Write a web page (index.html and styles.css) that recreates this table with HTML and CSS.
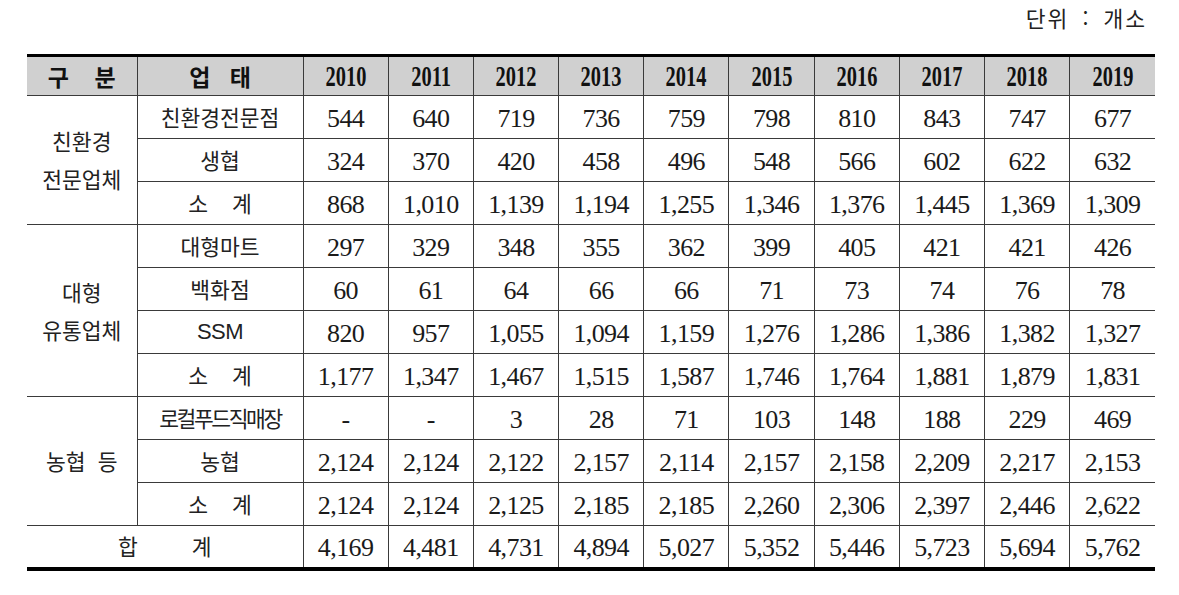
FILE: index.html
```html
<!DOCTYPE html>
<html lang="ko">
<head>
<meta charset="utf-8">
<link rel="stylesheet" href="styles.css">
</head>
<body>
<div class="page">
  <div class="unit">단위 : 개소</div>
  <table class="stats">
    <colgroup>
      <col class="c-grp"><col class="c-type">
      <col class="c-yr"><col class="c-yr"><col class="c-yr"><col class="c-yr"><col class="c-yr">
      <col class="c-yr"><col class="c-yr"><col class="c-yr"><col class="c-yr"><col class="c-yr">
    </colgroup>
    <thead>
      <tr class="head">
        <th class="ko-h">구&nbsp;&nbsp;&nbsp;&nbsp;분</th>
        <th class="ko-h">업&nbsp;&nbsp;&nbsp;태</th>
        <th><span class="yr">2010</span></th>
        <th><span class="yr">2011</span></th>
        <th><span class="yr">2012</span></th>
        <th><span class="yr">2013</span></th>
        <th><span class="yr">2014</span></th>
        <th><span class="yr">2015</span></th>
        <th><span class="yr">2016</span></th>
        <th><span class="yr">2017</span></th>
        <th><span class="yr">2018</span></th>
        <th><span class="yr">2019</span></th>
      </tr>
    </thead>
    <tbody>
      <tr>
        <td class="grp" rowspan="3">친환경<br>전문업체</td>
        <td class="ko">친환경전문점</td>
        <td>544</td><td>640</td><td>719</td><td>736</td><td>759</td><td>798</td><td>810</td><td>843</td><td>747</td><td>677</td>
      </tr>
      <tr>
        <td class="ko">생협</td>
        <td>324</td><td>370</td><td>420</td><td>458</td><td>496</td><td>548</td><td>566</td><td>602</td><td>622</td><td>632</td>
      </tr>
      <tr>
        <td class="ko">소&nbsp;&nbsp;&nbsp;&nbsp;계</td>
        <td>868</td><td>1,010</td><td>1,139</td><td>1,194</td><td>1,255</td><td>1,346</td><td>1,376</td><td>1,445</td><td>1,369</td><td>1,309</td>
      </tr>
      <tr>
        <td class="grp" rowspan="4">대형<br>유통업체</td>
        <td class="ko">대형마트</td>
        <td>297</td><td>329</td><td>348</td><td>355</td><td>362</td><td>399</td><td>405</td><td>421</td><td>421</td><td>426</td>
      </tr>
      <tr>
        <td class="ko">백화점</td>
        <td>60</td><td>61</td><td>64</td><td>66</td><td>66</td><td>71</td><td>73</td><td>74</td><td>76</td><td>78</td>
      </tr>
      <tr>
        <td class="ko ssm">SSM</td>
        <td>820</td><td>957</td><td>1,055</td><td>1,094</td><td>1,159</td><td>1,276</td><td>1,286</td><td>1,386</td><td>1,382</td><td>1,327</td>
      </tr>
      <tr>
        <td class="ko">소&nbsp;&nbsp;&nbsp;&nbsp;계</td>
        <td>1,177</td><td>1,347</td><td>1,467</td><td>1,515</td><td>1,587</td><td>1,746</td><td>1,764</td><td>1,881</td><td>1,879</td><td>1,831</td>
      </tr>
      <tr>
        <td class="grp" rowspan="3">농협&nbsp;&nbsp;등</td>
        <td class="ko tight">로컬푸드직매장</td>
        <td>-</td><td>-</td><td>3</td><td>28</td><td>71</td><td>103</td><td>148</td><td>188</td><td>229</td><td>469</td>
      </tr>
      <tr>
        <td class="ko">농협</td>
        <td>2,124</td><td>2,124</td><td>2,122</td><td>2,157</td><td>2,114</td><td>2,157</td><td>2,158</td><td>2,209</td><td>2,217</td><td>2,153</td>
      </tr>
      <tr>
        <td class="ko">소&nbsp;&nbsp;&nbsp;&nbsp;계</td>
        <td>2,124</td><td>2,124</td><td>2,125</td><td>2,185</td><td>2,185</td><td>2,260</td><td>2,306</td><td>2,397</td><td>2,446</td><td>2,622</td>
      </tr>
      <tr class="total">
        <td class="ko" colspan="2">합&nbsp;&nbsp;&nbsp;&nbsp;&nbsp;&nbsp;&nbsp;&nbsp;&nbsp;계</td>
        <td>4,169</td><td>4,481</td><td>4,731</td><td>4,894</td><td>5,027</td><td>5,352</td><td>5,446</td><td>5,723</td><td>5,694</td><td>5,762</td>
      </tr>
    </tbody>
  </table>
</div>
</body>
</html>
```

FILE: styles.css
```css
html, body {
  margin: 0;
  padding: 0;
  background: #ffffff;
}

.page {
  width: 1128px;
  padding: 4px 0 0 27px;
  font-family: "Liberation Serif", "Noto Sans CJK KR", serif;
  color: #1a1a1a;
}

.unit {
  font-family: "Noto Sans CJK KR", sans-serif;
  font-size: 21.5px;
  line-height: 28px;
  text-align: right;
  padding-right: 8px;
  letter-spacing: 2px;
  word-spacing: 5px;
  height: 50px;
  color: #222;
}

.stats {
  width: 1128px;
  table-layout: fixed;
  border-collapse: collapse;
  border-top: 3px solid #000;
  border-bottom: 4px solid #000;
}

.c-grp { width: 110px; }
.c-type { width: 166px; }
.c-yr { width: 85.2px; }

.stats th,
.stats td {
  border: 1px solid #3a3a3a;
  padding: 0;
  text-align: center;
  vertical-align: middle;
  overflow: hidden;
  white-space: nowrap;
}

.stats tr > :first-child { border-left: none; }
.stats tr > :last-child { border-right: none; }

.head {
  height: 40px;
  background: #d0d0d0;
}

.head th {
  font-weight: bold;
}

.ko-h {
  font-family: "Noto Sans CJK KR", sans-serif;
  font-size: 23px;
  font-weight: 700;
  color: #111;
}

.yr {
  display: inline-block;
  font-family: "Liberation Serif", serif;
  font-size: 30px;
  font-weight: bold;
  transform: scaleX(0.68);
  color: #111;
  line-height: 38px;
}

.stats tbody tr {
  height: 43px;
}

.stats td {
  font-size: 26px;
  letter-spacing: -0.6px;
  line-height: 30px;
  padding-top: 4px;
}

.stats td.ko,
.stats td.grp {
  font-family: "Noto Sans CJK KR", sans-serif;
  font-size: 21.5px;
  letter-spacing: 0;
  color: #222;
  padding-top: 0;
}

.stats td.tight {
  letter-spacing: -2.4px;
}

.stats td.grp {
  line-height: 38px;
  white-space: normal;
}

.stats td.ssm {
  font-family: "Liberation Sans", sans-serif;
  font-size: 22px;
  letter-spacing: -0.5px;
}
```
